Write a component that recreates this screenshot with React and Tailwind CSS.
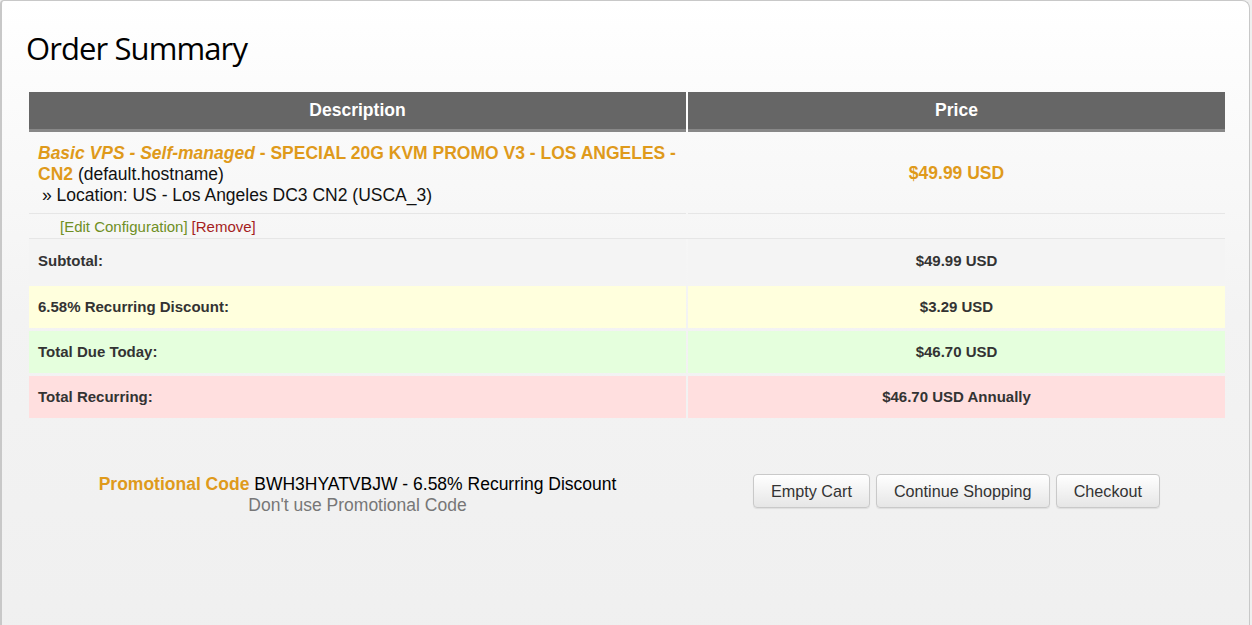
import React from "react";

const orange = "text-[#df9a1b]";

const totals = [
  { label: "Subtotal:", value: "$49.99 USD", bg: "bg-[#f4f4f4]", h: "h-[44px]" },
  { label: "6.58% Recurring Discount:", value: "$3.29 USD", bg: "bg-[#ffffdd]", h: "h-[42px]" },
  { label: "Total Due Today:", value: "$46.70 USD", bg: "bg-[#e5ffdd]", h: "h-[42px]" },
  { label: "Total Recurring:", value: "$46.70 USD Annually", bg: "bg-[#ffdfdf]", h: "h-[42px]" },
];

export default function App() {
  return (
    <div className="w-[1252px] h-[625px] overflow-hidden bg-[#efefef] font-['Liberation_Sans',Arial,sans-serif]">
      <div className="ml-0 mr-[2px] h-[700px] rounded-tr-[8px] rounded-tl-[4px] border-l-2 border-t border-r border-[#c8c8c8] bg-gradient-to-b from-white via-[#f3f3f3] via-45% to-[#efefef]">
        {/* Title */}
        <h1 className="pl-[24px] pt-[27px] h-[91px] font-['Open_Sans',sans-serif] text-[31px] leading-[40px] text-black tracking-[-0.9px]">
          Order Summary
        </h1>

        <div className="ml-[27px] w-[1196px]">
          {/* Header */}
          <div className="grid grid-cols-[657px_537px] gap-x-[2px] bg-white">
            <div className="h-[40px] bg-[#666] border-b-[3px] border-[#888] flex items-center justify-center text-white font-bold text-[17.5px]">
              Description
            </div>
            <div className="h-[40px] bg-[#666] border-b-[3px] border-[#888] flex items-center justify-center text-white font-bold text-[17.5px]">
              Price
            </div>
          </div>

          {/* Item */}
          <div className="grid grid-cols-[657px_537px] gap-x-[2px]">
            <div className="h-[82px] pt-[11px] pl-[9px] pr-[4px] text-[17.5px] leading-[21px] text-[#111] border-b border-[#e6e6e6]">
              <div>
                <span className={`${orange} font-bold italic`}>Basic VPS - Self-managed</span>
                <span className={`${orange} font-bold`}> - SPECIAL 20G KVM PROMO V3 - LOS ANGELES - CN2</span>{" "}
                (default.hostname)
              </div>
              <div className="pl-[4px]">» Location: US - Los Angeles DC3 CN2 (USCA_3)</div>
            </div>
            <div className={`h-[82px] flex items-center justify-center pt-[2px] font-bold text-[17.5px] ${orange} border-b border-[#e6e6e6]`}>
              $49.99 USD
            </div>
          </div>
          <div className="h-[25px] pl-[31px] pt-[2px] flex items-center text-[15px] border-b border-[#e6e6e6]">
            <span className="text-[#6f8f24]">[Edit Configuration]</span>
            <span className="ml-[4px] text-[#a51d1d]">[Remove]</span>
          </div>

          {/* Totals */}
          <div className="flex flex-col gap-[3px]">
            {totals.map((t, i) => (
              <div key={i} className="grid grid-cols-[657px_537px] gap-x-[2px]">
                <div className={`${t.h} ${t.bg} flex items-center pl-[9px] text-[15px] font-bold text-[#333]`}>
                  {t.label}
                </div>
                <div className={`${t.h} ${t.bg} flex items-center justify-center text-[15px] font-bold text-[#333]`}>
                  {t.value}
                </div>
              </div>
            ))}
          </div>

          {/* Promo + buttons */}
          <div className="grid grid-cols-[657px_537px] gap-x-[2px] mt-[54px]">
            <div className="flex flex-col items-center text-[17.5px] leading-[21px] pt-[2px]">
              <div className="text-black">
                <span className={`${orange} font-bold`}>Promotional Code</span> BWH3HYATVBJW - 6.58% Recurring Discount
              </div>
              <div className="text-[#777]">Don't use Promotional Code</div>
            </div>
            <div className="flex justify-center gap-[6px] pt-[2px]">
              {["Empty Cart", "Continue Shopping", "Checkout"].map((b) => (
                <button
                  key={b}
                  className="h-[34px] px-[17px] rounded-[4px] border border-[#c9c9c9] bg-gradient-to-b from-white to-[#e6e6e6] text-[16.2px] text-[#333] shadow-[0_1px_1px_rgba(0,0,0,0.08)]"
                >
                  {b}
                </button>
              ))}
            </div>
          </div>
        </div>
      </div>
    </div>
  );
}
